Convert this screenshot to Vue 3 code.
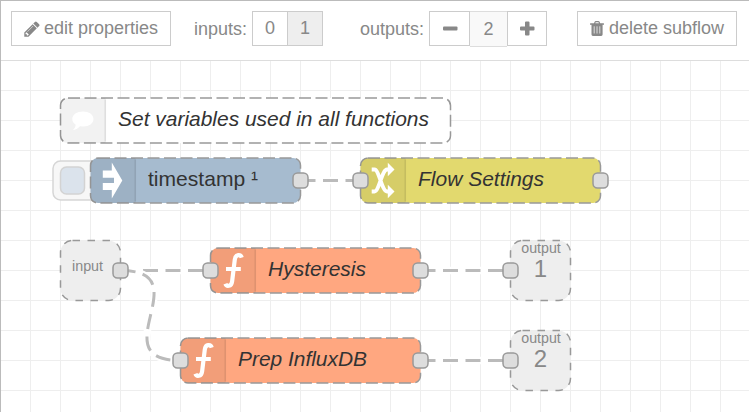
<script setup>
const gridX = Array.from({ length: 24 }, (_, i) => 30.5 + i * 30)
const gridY = Array.from({ length: 11 }, (_, i) => 90.5 + i * 30)

const nodes = [
  { id: 'comment', x: 60.5, y: 98, w: 390, fill: '#ffffff', icon: 'comment', label: 'Set variables used in all functions', len: 311, italic: true, ports: [] },
  { id: 'inject', x: 90.5, y: 158, w: 210, fill: '#a6bbcf', icon: 'inject', label: 'timestamp ¹', len: 110, italic: false, ports: [210] },
  { id: 'change', x: 360.5, y: 158, w: 240, fill: '#e2d96e', icon: 'change', label: 'Flow Settings', len: 126, italic: true, ports: [0, 240] },
  { id: 'hyst', x: 210.5, y: 248, w: 210, fill: '#ffa780', icon: 'fn', label: 'Hysteresis', len: 98, italic: true, ports: [0, 210] },
  { id: 'influx', x: 180.5, y: 338, w: 240, fill: '#ffa780', icon: 'fn', label: 'Prep InfluxDB', len: 129, italic: true, ports: [0, 240] }
]

const ends = [
  { id: 'in', x: 60.5, y: 240.5, label: 'input', lx: 27, ly: 30.5, len: 31, port: 60 },
  { id: 'out1', x: 510.5, y: 240.5, label: 'output', lx: 30.5, ly: 12.5, len: 39.5, num: 1, port: 0 },
  { id: 'out2', x: 510.5, y: 330.5, label: 'output', lx: 30.5, ly: 12.5, len: 39.5, num: 2, port: 0 }
]

const links = [
  'M300.5 180.5H360.5',
  'M120.5 270.5H210.5',
  'M120.5 270.5C201.6 270.5 99.4 360.5 180.5 360.5',
  'M420.5 270.5H510.5',
  'M420.5 360.5H510.5'
]
</script>

<template>
  <div class="workspace">
    <header class="toolbar">
      <button class="btn edit">
        <svg class="pencil" width="16" height="18" viewBox="0 -1536 1536 1792">
          <path transform="scale(1 -1)" d="M363 0l91 91l-235 235l-91 -91v-107h128v-128h107zM886 928q0 22 -22 22q-10 0 -17 -7l-542 -542q-7 -7 -7 -17q0 -22 22 -22q10 0 17 7l542 542q7 7 7 17zM832 1120l416 -416l-832 -832h-416v416zM1515 1024q0 -53 -37 -90l-166 -166l-416 416l166 165q36 38 90 38q53 0 91 -38l235 -234q37 -39 37 -91z" />
        </svg>
        <span>edit properties</span>
      </button>
      <span class="caption inputs">inputs:</span>
      <div class="group">
        <button class="btn digit">0</button>
        <button class="btn digit selected">1</button>
      </div>
      <span class="caption outputs">outputs:</span>
      <div class="group">
        <button class="btn step minus">
          <svg width="16" height="16" viewBox="0 0 16 16"><rect x="1" y="5.5" width="14.5" height="4" rx="1" /></svg>
        </button>
        <span class="count">2</span>
        <button class="btn step plus">
          <svg width="16" height="16" viewBox="0 0 16 16"><path d="M7 .5h2.5q1 0 1 1v4H14.5q1 0 1 1v2q0 1-1 1h-4v4q0 1-1 1H7q-1 0-1-1v-4H2q-1 0-1-1V6.500q0-1 1-1h4V1.500q0-1 1-1z" /></svg>
        </button>
      </div>
      <button class="btn delete">
        <svg class="trash" width="14" height="18" viewBox="0 0 14 18">
          <path fill-rule="evenodd" d="M4.400 2.200Q4.800 1 6 1H8.200Q9.400 1 9.800 2.200L10.200 3.300H13.500Q14 3.300 14 3.800V4.800H12.600V14.600Q12.600 16 11.200 16H2.900Q1.500 16 1.500 14.600V4.800H0V3.800Q0 3.300.5 3.300H4ZM5.300 3.300H8.900L8.500 2.300H5.700Z" />
          <path class="slats" d="M4.200 6.300V13.500M7 6.300V13.500M9.800 6.300V13.500" />
        </svg>
        <span>delete subflow</span>
      </button>
    </header>

    <svg class="canvas" width="748" height="351" viewBox="1 61 748 351">
      <g class="grid">
        <line v-for="x in gridX" :key="'x' + x" :x1="x" :x2="x" y1="61" y2="412" />
        <line v-for="y in gridY" :key="'y' + y" :y1="y" :y2="y" x1="1" x2="749" />
      </g>

      <g v-for="e in ends" :key="e.id" :transform="`translate(${e.x} ${e.y})`">
        <rect class="end" width="60" height="60" rx="12" />
        <text class="end-label" :x="e.lx" :y="e.ly" :textLength="e.len" lengthAdjust="spacingAndGlyphs">{{ e.label }}</text>
        <text v-if="e.num" class="end-num" x="30" y="36.5">{{ e.num }}</text>
      </g>

      <g v-for="d in links" :key="d">
        <path class="halo" :d="d" />
        <path class="link" :d="d" />
      </g>

      <g class="trigger">
        <rect class="trigger-outer" x="53" y="161" width="48" height="39" rx="7.5" />
        <rect class="trigger-inner" x="60.5" y="167" width="24" height="27" rx="6" />
      </g>

      <g v-for="n in nodes" :key="n.id" :transform="`translate(${n.x} ${n.y})`">
        <rect class="body" :width="n.w" height="45" rx="7.5" :fill="n.fill" />
        <path class="shade" d="M7.5 0H45V45H7.5Q0 45 0 37.5V7.5Q0 0 7.5 0Z" />
        <path class="divider" d="M44.800 1.500V43.500" />
        <g class="icon">
          <path v-if="n.icon === 'comment'" d="M22.500 13.500C28.500 13.500 33 16.500 33 21C33 25.500 28.500 28.500 23 28.500L19.500 28.200C17.500 30.500 15 31.800 12 32.300C14 30.800 15 29 15.200 26.700C13 25.300 11.800 23.300 11.800 21C11.800 16.500 16.500 13.500 22.500 13.500Z" />
          <path v-else-if="n.icon === 'inject'" d="M12.300 12.500H21.300V4.500L31.800 22.500L21.300 40.500V32H12.300V25H23.500V19.700H12.300Z" />
          <g v-else-if="n.icon === 'change'">
            <path class="stroke" d="M11.200 11.500H14C18.500 11.500 21.500 33.500 26.500 33.500H29M11.200 33.500H14C18.500 33.500 21.500 11.500 26.500 11.500H29" />
            <path d="M27.300 4.700L34 11.500L27.300 18.300ZM27.300 26.700L34 33.500L27.300 40.300Z" />
          </g>
          <path v-else class="stroke fn" d="M31.200 9.600C30.300 6.300 25 5.800 24.300 11.500L21.600 33.500C20.900 38.800 16 38.800 14.900 35.800M15.500 21H30.300" />
        </g>
        <text class="label" :class="{ italic: n.italic }" x="57.5" y="28" :textLength="n.len" lengthAdjust="spacingAndGlyphs">{{ n.label }}</text>
        <rect v-for="p in n.ports" :key="p" class="port" :x="p - 7.5" y="15" width="15" height="15" rx="4.5" />
      </g>

      <rect v-for="e in ends" :key="'p' + e.id" class="port" :x="e.x + e.port - 7.5" :y="e.y + 22.5" width="15" height="15" rx="4.5" />
    </svg>
  </div>
</template>

<style>
body {
  margin: 0;
  background: #fff;
  overflow: hidden;
}
</style>

<style scoped>
.workspace {
  box-sizing: border-box;
  width: 749px;
  height: 412px;
  border-top: 1px solid #bbb;
  border-left: 1px solid #bbb;
  background: #fff;
  font-family: "Liberation Sans", Arial, sans-serif;
  overflow: hidden;
}
.toolbar {
  box-sizing: border-box;
  display: flex;
  align-items: flex-start;
  height: 60px;
  padding: 10px 0 0 10px;
  border-bottom: 1px solid #ddd;
  color: #888;
  font-size: 18px;
  line-height: 35px;
  white-space: nowrap;
}
.btn {
  box-sizing: border-box;
  display: flex;
  align-items: center;
  justify-content: center;
  height: 35px;
  margin: 0;
  padding: 0;
  border: 1px solid #ccc;
  background: #fff;
  color: #888;
  font: inherit;
}
.btn svg {
  fill: #888;
  flex: none;
}
.edit {
  width: 160px;
  gap: 4px;
}
.delete {
  width: 160px;
  margin-left: 30px;
  gap: 5px;
}
.caption {
  line-height: 37px;
}
.inputs {
  width: 58px;
  margin-left: 23px;
}
.outputs {
  width: 69px;
  margin-left: 37px;
}
.group {
  display: flex;
}
.digit {
  width: 36px;
}
.digit + .digit {
  margin-left: -1px;
}
.selected {
  background: #eee;
}
.step {
  width: 41px;
}
.plus {
  width: 40px;
}
.count {
  box-sizing: border-box;
  width: 37px;
  height: 36px;
  border-top: 1px solid #ddd;
  border-bottom: 1px solid #ddd;
  background: #f9f9f9;
  text-align: center;
}
.trash .slats {
  fill: none;
  stroke: #ddd;
  stroke-width: 1;
}
.canvas {
  display: block;
}
.grid line {
  stroke: #eee;
  stroke-width: 1;
}
.end {
  fill: #eee;
  stroke: #999;
  stroke-width: 1.5;
  stroke-dasharray: 7.5 7.5;
}
.end-label {
  fill: #888;
  font-size: 15px;
  text-anchor: middle;
}
.end-num {
  fill: #888;
  font-size: 24px;
  text-anchor: middle;
}
.halo {
  fill: none;
  stroke: #fff;
  stroke-width: 7.5;
}
.link {
  fill: none;
  stroke: #bbb;
  stroke-width: 3;
  stroke-dasharray: 15 7.5;
}
.trigger-outer {
  fill: #f7f7f7;
  stroke: #d6d6d6;
  stroke-width: 1.5;
}
.trigger-inner {
  fill: #dbe3ec;
  stroke: #d3d3d3;
  stroke-width: 1.5;
}
.body {
  stroke: #999;
  stroke-width: 1.5;
  stroke-dasharray: 12 4.5;
}
.shade {
  fill: #000;
  fill-opacity: 0.05;
}
.divider {
  stroke: #000;
  stroke-opacity: 0.1;
  stroke-width: 1.5;
}
.icon {
  fill: #fff;
}
.stroke {
  fill: none;
  stroke: #fff;
  stroke-width: 3.8;
}
.fn {
  stroke-width: 4.2;
}
.label {
  fill: #333;
  font-size: 21px;
}
.italic {
  font-style: italic;
}
.port {
  fill: #ddd;
  stroke: #999;
  stroke-width: 1.5;
}
</style>
